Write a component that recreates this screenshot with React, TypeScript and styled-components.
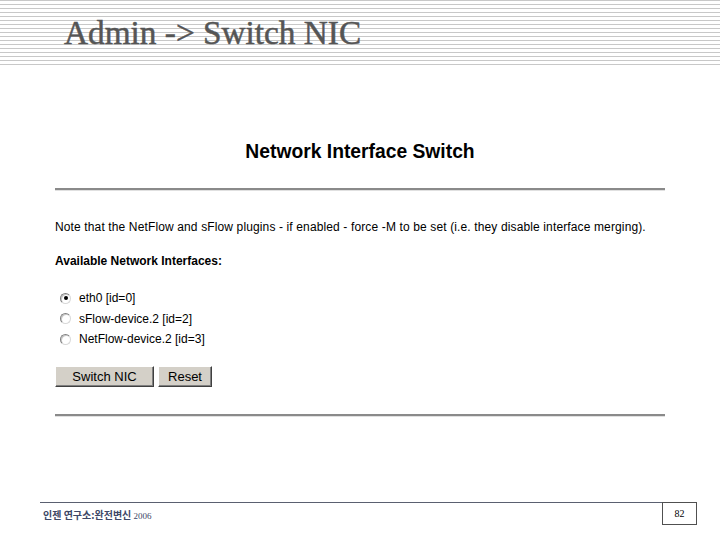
import React, { useState } from 'react'
import styled, { createGlobalStyle } from 'styled-components'

const GlobalStyle = createGlobalStyle`
	html, body {
		margin: 0;
		padding: 0;
		background: #ffffff;
	}
	body {
		width: 720px;
		height: 540px;
		overflow: hidden;
	}
`

const interfaces = [
	{ id: 0, name: 'eth0' },
	{ id: 2, name: 'sFlow-device.2' },
	{ id: 3, name: 'NetFlow-device.2' },
]

const App = () => {
	const [selected, setSelected] = useState(0)

	return (
		<>
			<GlobalStyle />
			<Slide>
				<TitleBar>
					<Title>Admin -&gt; Switch NIC</Title>
				</TitleBar>
				<Content>
					<Heading>Network Interface Switch</Heading>
					<Rule />
					<Note>
						Note that the NetFlow and sFlow plugins - if enabled - force -M to be set (i.e. they disable interface merging).
					</Note>
					<SubHeading>Available Network Interfaces:</SubHeading>
					<RadioList>
						{interfaces.map((iface) => (
							<RadioRow key={iface.id}>
								<Radio checked={selected === iface.id} onClick={() => setSelected(iface.id)} />
								<RadioLabel>
									{iface.name} [id={iface.id}]
								</RadioLabel>
							</RadioRow>
						))}
					</RadioList>
					<ButtonRow>
						<Button width={99}>Switch NIC</Button>
						<Button width={54} onClick={() => setSelected(0)}>
							Reset
						</Button>
					</ButtonRow>
					<Rule />
				</Content>
				<Footer>
					<FooterText>
						인젠 연구소:완전변신 <Year>2006</Year>
					</FooterText>
					<PageNumber>82</PageNumber>
				</Footer>
			</Slide>
		</>
	)
}

const Slide = styled.div`
	width: 720px;
	height: 540px;
	display: flex;
	flex-direction: column;
	background: #ffffff;
`

const TitleBar = styled.div`
	height: 66px;
	box-sizing: border-box;
	padding: 13px 0 0 64px;
	background: repeating-linear-gradient(
		to bottom,
		#c8c8c8 0px,
		#c8c8c8 1px,
		#ffffff 1px,
		#ffffff 4px
	);
	background-size: 100% 65px;
	background-repeat: no-repeat;
`

const Title = styled.h1`
	margin: 0;
	font-family: 'Liberation Serif', 'Times New Roman', serif;
	font-size: 33.3px;
	font-weight: normal;
	line-height: 40px;
	color: #555555;
	white-space: nowrap;
	-webkit-text-stroke: 0.5px #555555;
`

const Content = styled.div`
	display: flex;
	flex-direction: column;
	width: 610px;
	margin-left: 55px;
	padding-top: 75px;
`

const Heading = styled.div`
	font-family: 'Liberation Sans', Arial, sans-serif;
	font-weight: bold;
	font-size: 19.3px;
	line-height: 22px;
	text-align: center;
	color: #000000;
	margin-bottom: 25px;
`

const Rule = styled.div`
	height: 2px;
	background: #8a8a8a;
	border-bottom: 1px solid #e0e0e0;
`

const Note = styled.div`
	margin-top: 28px;
	font-family: 'Liberation Sans', Arial, sans-serif;
	font-size: 12px;
	line-height: 16px;
	letter-spacing: 0.13px;
	color: #000000;
	white-space: nowrap;
`

const SubHeading = styled.div`
	margin-top: 18px;
	font-family: 'Liberation Sans', Arial, sans-serif;
	font-size: 12px;
	font-weight: bold;
	line-height: 16px;
	color: #000000;
`

const RadioList = styled.div`
	display: flex;
	flex-direction: column;
	gap: 4px;
	margin-top: 21px;
	padding-left: 5px;
`

const RadioRow = styled.div`
	display: flex;
	align-items: center;
	height: 16.5px;
`

const Radio = styled.span<{ checked?: boolean }>`
	position: relative;
	width: 11px;
	height: 11px;
	box-sizing: border-box;
	border-radius: 50%;
	border: 1px solid #808080;
	border-right-color: #d8d8d8;
	border-bottom-color: #d8d8d8;
	box-shadow: inset 1px 1px 0 #c8c8c8;
	background: #ffffff;
	margin-right: 8px;
	cursor: pointer;

	&::after {
		content: '';
		display: ${({ checked }) => (checked ? 'block' : 'none')};
		position: absolute;
		left: 2.5px;
		top: 2.5px;
		width: 4px;
		height: 4px;
		border-radius: 50%;
		background: #000000;
	}
`

const RadioLabel = styled.span`
	font-family: 'Liberation Sans', Arial, sans-serif;
	font-size: 12px;
	line-height: 16px;
	color: #000000;
`

const ButtonRow = styled.div`
	display: flex;
	gap: 4px;
	margin-top: 18px;
	margin-bottom: 27px;
`

const Button = styled.button<{ width: number }>`
	width: ${({ width }) => width}px;
	height: 21px;
	box-sizing: border-box;
	padding: 0;
	background: #d4d0c8;
	border: 1px solid;
	border-color: #ffffff #404040 #404040 #ffffff;
	box-shadow: inset -1px -1px 0 #808080;
	font-family: 'Liberation Sans', Arial, sans-serif;
	font-size: 13px;
	color: #000000;
	cursor: pointer;
`

const Footer = styled.div`
	display: flex;
	align-items: flex-start;
	margin-top: 85px;
	padding-left: 40px;
`

const FooterText = styled.div`
	flex: 0 0 622px;
	box-sizing: border-box;
	height: 22px;
	border-top: 1px solid #5a6070;
	padding: 5px 0 0 3px;
	font-family: 'Noto Sans CJK KR', 'Noto Sans', sans-serif;
	font-size: 10px;
	font-weight: bold;
	line-height: 14px;
	color: #3d4766;
	white-space: nowrap;
`

const Year = styled.span`
	font-family: 'Liberation Serif', 'Times New Roman', serif;
	font-weight: normal;
	font-size: 9px;
`

const PageNumber = styled.div`
	width: 35px;
	height: 23px;
	box-sizing: border-box;
	border: 1px solid #505050;
	display: flex;
	align-items: center;
	justify-content: center;
	font-family: 'Liberation Serif', 'Times New Roman', serif;
	font-size: 10px;
	color: #000000;
`

export default App
